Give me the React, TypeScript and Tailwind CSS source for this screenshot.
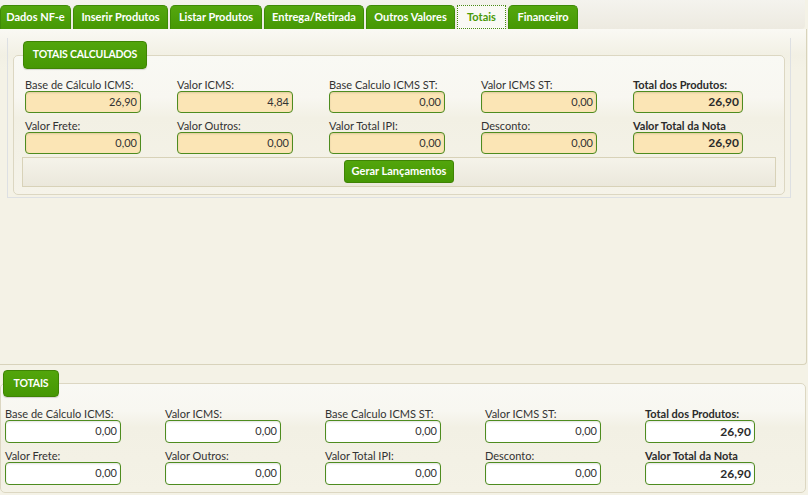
import React from "react";

interface FieldProps {
  label: string;
  value: string;
  amber?: boolean;
  strong?: boolean;
  h: string;
}

const Field = ({ label, value, amber, strong, h }: FieldProps) => {
  return (
    <div className="flex flex-col">
      <span
        className={`block h-[13px] leading-[13px] whitespace-nowrap ${
          strong ? "text-[11px] font-bold text-[#2b2b2b]" : "text-[11px] text-[#333]"
        }`}
      >
        {label}
      </span>
      <div
        className={`${h} ${strong ? "w-[110px]" : "w-[116px]"} flex items-center justify-end pr-[3px] rounded-[4px] border-[1.5px] border-[#4e8c1f] shadow-[inset_0_1px_2px_rgba(0,0,0,0.12)] ${
          amber ? "bg-[#fbe5b5]" : "bg-white"
        } ${strong ? "text-[12px] font-bold text-[#2b2b2b]" : "text-[11px] text-[#333]"}`}
      >
        {value}
      </div>
    </div>
  );
};

const tabs = [
  { name: "Dados NF-e", w: "w-[71px]" },
  { name: "Inserir Produtos", w: "w-[95px]" },
  { name: "Listar Produtos", w: "w-[92px]" },
  { name: "Entrega/Retirada", w: "w-[100px]" },
  { name: "Outros Valores", w: "w-[89px]" },
  { name: "Totais", w: "w-[49px]", active: true },
  { name: "Financeiro", w: "w-[70px]" },
];

const calcRow1 = [
  { label: "Base de Cálculo ICMS:", value: "26,90" },
  { label: "Valor ICMS:", value: "4,84" },
  { label: "Base Calculo ICMS ST:", value: "0,00" },
  { label: "Valor ICMS ST:", value: "0,00" },
];
const calcRow2 = [
  { label: "Valor Frete:", value: "0,00" },
  { label: "Valor Outros:", value: "0,00" },
  { label: "Valor Total IPI:", value: "0,00" },
  { label: "Desconto:", value: "0,00" },
];
const totRow1 = [
  { label: "Base de Cálculo ICMS:", value: "0,00" },
  { label: "Valor ICMS:", value: "0,00" },
  { label: "Base Calculo ICMS ST:", value: "0,00" },
  { label: "Valor ICMS ST:", value: "0,00" },
];

const legendCls =
  "flex items-center justify-center rounded-[4px] border border-[#3f8404] bg-gradient-to-b from-[#52a50c] to-[#469804] text-white text-[10.5px] font-bold tracking-[-0.2px] shadow-[0_1px_1px_rgba(0,0,0,0.15)] whitespace-nowrap";

export default function App() {
  return (
    <div className="w-[808px] h-[495px] overflow-hidden bg-[#f4f2e6] font-['Lato','Open_Sans',sans-serif]">
      {/* tab strip */}
      <div className="h-[29px] w-[805px] rounded-br-[4px] bg-gradient-to-b from-[#f4f3ee] to-[#edeae0] flex items-end gap-[2px]">
        {tabs.map((t) =>
          t.active ? (
            <div
              key={t.name}
              className={`${t.w} h-[24px] flex items-center justify-center bg-[#f9f9f4] border border-dotted border-[#4a8c14] text-[#4a9a08] text-[11px] font-bold`}
            >
              {t.name}
            </div>
          ) : (
            <div
              key={t.name}
              className={`${t.w} h-[24px] flex items-center justify-center rounded-t-[5px] border border-b-0 border-[#3e8a06] bg-gradient-to-b from-[#54a70e] to-[#469804] text-white text-[11px] font-bold`}
            >
              {t.name}
            </div>
          )
        )}
      </div>

      {/* tab panel */}
      <div className="h-[336px] w-[807px] border-r border-b border-[#d8d3bb] rounded-br-[4px] bg-[linear-gradient(to_bottom,#faf9f4_0px,#f2f0e4_26px,#f4f2e6_40px)] pt-[9px] pl-[7px]">
        <div className="w-[784px] border-x border-b border-[#dde0e3] pt-[3px] pb-[2px] px-[5px]">
          <fieldset className="w-[772px] border border-[#dcd7c2] rounded-[5px] bg-[linear-gradient(to_bottom,#f9f9f4_0%,#f8f7f1_30%,#f2f0e4_45%,#f5f3e9_100%)] pb-[7px]">
            <legend className="ml-[9px]">
              <div className={`${legendCls} h-[28px] w-[124px]`}>TOTAIS CALCULADOS</div>
            </legend>
            <div className="pl-[11px] pt-[9px] flex flex-col gap-[6px]">
              <div className="flex">
                {calcRow1.map((f) => (
                  <div key={f.label} className="w-[152px]">
                    <Field label={f.label} value={f.value} amber h="h-[22px]" />
                  </div>
                ))}
                <Field label="Total dos Produtos:" value="26,90" amber strong h="h-[22px]" />
              </div>
              <div className="flex">
                {calcRow2.map((f) => (
                  <div key={f.label} className="w-[152px]">
                    <Field label={f.label} value={f.value} amber h="h-[22px]" />
                  </div>
                ))}
                <Field label="Valor Total da Nota" value="26,90" amber strong h="h-[22px]" />
              </div>
            </div>
            <div className="mt-[3px] mx-[8px] h-[30px] border border-[#d8d2b8] bg-gradient-to-b from-[#f5f3ea] to-[#ebe8dc] flex justify-center items-center">
              <button className="h-[23px] w-[110px] mb-[2px] rounded-[3px] border border-[#3f8404] bg-gradient-to-b from-[#52a50c] to-[#469804] text-white text-[11px] font-bold whitespace-nowrap">
                Gerar Lançamentos
              </button>
            </div>
          </fieldset>
        </div>
      </div>

      {/* totais */}
      <fieldset className="mt-[5px] w-[806px] border border-[#dcd7c2] rounded-[5px] bg-[linear-gradient(to_bottom,#f9f9f4_0%,#f8f7f1_25%,#f2f0e4_40%,#f4f2e6_100%)] pb-[7px]">
        <legend className="ml-[2px]">
          <div className={`${legendCls} h-[27px] w-[56px]`}>TOTAIS</div>
        </legend>
        <div className="pl-[4px] pt-[10px] flex flex-col gap-[6px]">
          <div className="flex">
            {totRow1.map((f) => (
              <div key={f.label} className="w-[160px]">
                <Field label={f.label} value={f.value} h="h-[23px]" />
              </div>
            ))}
            <Field label="Total dos Produtos:" value="26,90" strong h="h-[23px]" />
          </div>
          <div className="flex">
            {calcRow2.map((f) => (
              <div key={f.label} className="w-[160px]">
                <Field label={f.label} value="0,00" h="h-[23px]" />
              </div>
            ))}
            <Field label="Valor Total da Nota" value="26,90" strong h="h-[23px]" />
          </div>
        </div>
      </fieldset>
    </div>
  );
}
